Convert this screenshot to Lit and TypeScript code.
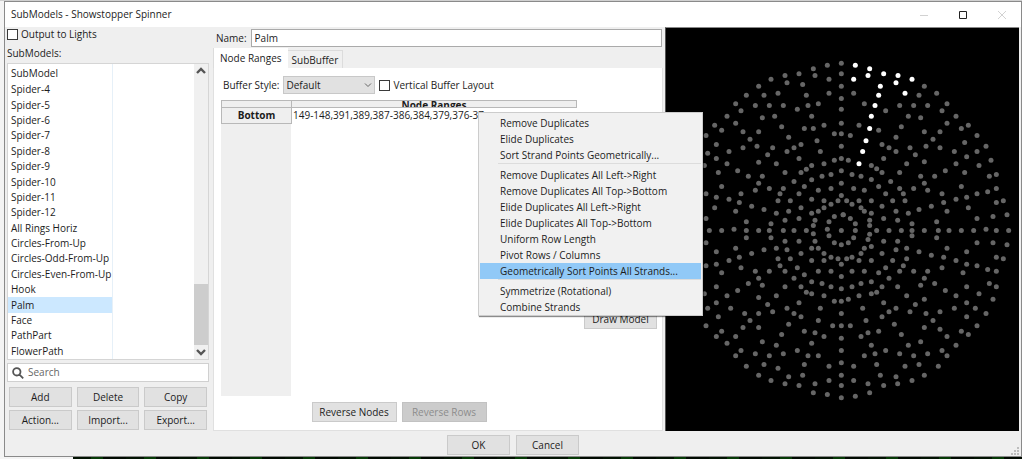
import { LitElement, html, svg, css } from "lit";
import { customElement, property, state } from "lit/decorators.js";
import { classMap } from "lit/directives/class-map.js";

type Quadrant = { x: number; y: number; dots: string };

/* Node positions, three units to a pixel, listed per quadrant. */
const NODES: Quadrant[] = [
  {
    x: -6,
    y: 6,
    dots: `532,98 532,130 532,167 532,204 532,236 532,278 532,310 532,347 532,384 532,421 532,458 532,495
    490,104 448,115 405,130 363,135 321,146 284,167 247,194 215,220 189,257 152,284 126,315
    453,135 495,146 495,188 369,157 416,162 342,188 300,194 427,194 463,220 432,225 358,225 316,225 274,225
    231,241 400,236 443,257 332,257 295,262 215,278 173,299 353,289 480,284 448,294 421,294 511,310
    284,304 237,304 374,320 258,326 459,331 411,342 157,342 279,347 237,352 326,352 390,352 369,363 469,363
    195,363 131,368 311,373 157,384 405,384 511,389 284,395 189,400 337,400 480,400 121,405 443,405 427,416
    221,421 163,426 363,426 411,426 501,432 253,437 295,437 474,437 443,448 390,453 284,458 421,468 173,468
    316,474 358,474 501,474 274,479 463,479 126,490 231,490 348,490 405,490 157,500 195,506 443,506
    342,511 379,511 480,511 522,511 226,516 501,521 263,527 152,532 411,532 480,532 300,537 215,542 374,542
    463,542 337,548 443,548 537,553 511,558 126,564 405,564 363,569 453,569 247,574 495,574 321,580 448,585`,
  },
  {
    x: 522,
    y: 6,
    dots: `41,188 253,167 290,188 237,194 73,220 179,225 221,225 263,225 321,220 137,241 306,241 205,257 242,262
    348,257 321,278 385,284 57,284 184,289 364,294 116,299 253,304 300,304 31,315 411,315 168,320 279,326
    374,336 126,342 147,352 210,352 258,347 300,352 438,347 168,363 343,363 411,363 226,373 380,379 131,384
    25,389 453,389 253,394 200,400 348,400 94,405 417,405 110,415 126,426 179,426 316,421 374,426 36,432
    63,437 242,437 284,437 448,437 469,432 94,447 152,453 253,458 116,468 364,468 41,474 73,479 179,474
    221,474 263,479 469,474 137,490 190,490 306,490 411,490 443,484 380,500 348,506 20,511 57,511 94,511
    158,511 195,511 490,511 36,521 311,516 469,516 63,532 126,527 274,527 385,532 73,542 237,537 168,542
    321,542 94,548 205,548 10,553 501,553 31,564 131,564 411,564 459,558 89,569 173,569 46,580 89,585
    216,580 290,574`,
  },
  {
    x: -6,
    y: 600,
    dots: `136,6 173,6 210,2 247,6 284,6 316,6 358,6 390,6 427,6 490,2 532,6 448,16 495,22 247,28 321,28 363,38
    405,38 453,38 126,43 511,43 532,49 215,59 337,59 443,59 463,59 300,64 369,64 157,70 263,75 411,75
    480,75 226,86 501,86 342,91 379,91 522,91 195,96 443,96 480,96 157,107 532,107 126,112 348,112 231,118
    400,118 274,128 316,128 363,128 463,128 501,128 173,133 421,139 532,144 284,149 390,149 443,160 253,165
    474,165 295,170 157,175 363,175 411,175 501,175 532,181 221,186 427,191 121,196 443,196 189,202 337,202
    480,202 284,207 511,218 532,218 157,223 405,223 311,228 131,239 200,239 369,239 469,239 326,250 242,255
    284,255 390,255 532,255 163,265 411,265 258,276 463,276 374,287 126,292 506,292 532,292 237,297 284,297
    173,308 421,308 453,313 353,318 157,324 215,324 480,324 532,329 295,340 189,344 443,344 337,350 231,366
    400,366 532,366 274,376 358,376 215,382 316,382 432,382 463,382 532,403 300,408 421,408 247,413 495,413
    342,419 284,440 416,440 532,440 374,445 321,456 495,456 363,466 453,466 405,471 532,471 448,493 490,498
    532,508`,
  },
  {
    x: 522,
    y: 600,
    dots: `46,6 110,6 147,6 184,6 216,6 253,6 295,6 327,6 364,6 401,6 438,2 469,6 506,6 89,17 216,22 41,28 84,33
    290,28 131,38 173,38 25,43 411,43 459,43 501,49 94,54 73,59 200,59 321,59 168,64 237,70 380,70 63,75
    126,75 274,80 36,86 311,86 469,86 20,91 200,91 490,91 57,96 94,96 158,96 348,96 380,107 190,112 411,112
    137,118 306,118 443,123 36,128 73,128 179,128 221,128 263,128 469,128 116,133 369,133 147,149 253,149
    94,160 63,165 284,165 448,165 242,170 36,175 126,175 173,175 380,175 469,175 316,186 110,191 94,196
    57,202 200,202 348,202 417,196 25,212 253,212 459,212 131,223 380,223 226,228 68,239 168,239 343,239
    406,239 147,250 210,250 300,250 258,255 438,255 126,265 380,265 78,276 279,276 163,287 31,292 411,292
    253,297 300,302 116,308 364,308 84,313 184,318 385,318 63,324 321,324 242,340 94,350 205,350 348,350
    137,366 306,366 105,376 179,376 263,376 73,382 221,382 321,382 110,408 237,408 41,413 195,413 295,413
    121,440 253,440 168,445 41,456 216,456 84,466 173,466 131,471 89,493 46,503`,
  },
];

const LIT_NODES: Quadrant = {
  x: 522,
  y: 6,
  dots: `46,104 89,115 84,135 41,146 131,130 174,135 168,157 216,146 195,188 121,167 116,194 105,225 94,257
  89,294 78,331 68,363 57,400`,
};

const drawNodes = (q: Quadrant) =>
  q.dots
    .trim()
    .split(/\s+/)
    .map((pair) => {
      const [x, y] = pair.split(",").map(Number);
      return svg`<circle cx=${x + q.x} cy=${y + q.y} r="7.5"></circle>`;
    });

const shared = css`
  * {
    box-sizing: border-box;
  }
  button,
  input,
  select {
    font: inherit;
    color: inherit;
    margin: 0;
  }
  .btn {
    height: 20px;
    padding: 0;
    border: 1px solid #cacaca;
    background: #e1e1e1;
    line-height: 16px;
    text-align: center;
  }
  .btn:disabled {
    background: #cccccc;
    border-color: #c2c2c2;
    color: #8c8c8c;
  }
  .check {
    display: flex;
    align-items: center;
    gap: 3px;
  }
  .check input {
    appearance: none;
    width: 11px;
    height: 11px;
    border: 1px solid #3a3a3a;
    background: #fff;
  }
`;

@customElement("model-preview")
export class ModelPreview extends LitElement {
  static styles = css`
    :host {
      display: block;
      background: #000;
      border-left: 1px solid #555;
      border-top: 1px solid #888;
      overflow: hidden;
      position: relative;
    }
    .canvas {
      display: block;
      width: 100%;
      height: 100%;
    }
    .off {
      fill: #666;
    }
    .on {
      fill: #fff;
    }
  `;
  render() {
    return html`<svg class="canvas" viewBox="0 0 1059 1206" role="img" aria-label="Model preview">
      <g class="off">${NODES.map(drawNodes)}</g>
      <g class="on">${drawNodes(LIT_NODES)}</g>
    </svg>`;
  }
}

@customElement("submodel-list")
export class SubmodelList extends LitElement {
  @property({ type: Array }) items: string[] = [];
  @state() selected = "Palm";

  static styles = [
    shared,
    css`
      :host {
        display: grid;
        grid-template-columns: 1fr 14px;
        background: #fff;
        border: 1px solid #d5d5d5;
        min-height: 0;
      }
      .rows {
        display: flex;
        flex-direction: column;
        width: 105px;
        border-right: 1px solid #e6f0f8;
      }
      .head {
        height: 18px;
        padding-left: 3px;
        line-height: 18px;
      }
      .list {
        flex: 1;
        display: grid;
        grid-template-columns: 100%;
        grid-auto-rows: 1fr;
        margin: 0;
        padding: 0;
        list-style: none;
      }
      .item {
        display: flex;
        align-items: center;
        padding-left: 3px;
        white-space: nowrap;
        line-height: 15px;
        min-height: 0;
      }
      .selected {
        background: #cce8ff;
      }
      .scroll {
        display: flex;
        flex-direction: column;
        align-items: stretch;
        background: #f0f0f0;
      }
      .arrow {
        height: 14px;
        padding: 0;
        border: 0;
        background: none;
        display: flex;
        align-items: center;
        justify-content: center;
      }
      .track {
        flex: 1;
        display: flex;
        align-items: flex-end;
      }
      .thumb {
        width: 100%;
        height: 23%;
        background: #cdcdcd;
      }
      .chev {
        fill: none;
        stroke: #555;
        stroke-width: 2.4;
      }
    `,
  ];

  render() {
    return html`
      <div class="rows">
        <div class="head">SubModel</div>
        <ul class="list" role="listbox" aria-label="SubModels">
          ${this.items.map(
            (name) => html`<li
              role="option"
              aria-selected=${name === this.selected}
              class=${classMap({ item: true, selected: name === this.selected })}
              @click=${() => (this.selected = name)}
            >${name}</li>`,
          )}
        </ul>
      </div>
      <div class="scroll">
        <button class="arrow" aria-label="Scroll up">
          <svg width="10" height="8" viewBox="0 0 10 8"><path class="chev" d="M1 6 L5 2 L9 6" /></svg>
        </button>
        <div class="track"><div class="thumb"></div></div>
        <button class="arrow" aria-label="Scroll down">
          <svg width="10" height="8" viewBox="0 0 10 8"><path class="chev" d="M1 2 L5 6 L9 2" /></svg>
        </button>
      </div>
    `;
  }
}

@customElement("context-menu")
export class ContextMenu extends LitElement {
  @property({ type: Array }) groups: string[][] = [];
  @state() active = "Geometrically Sort Points All Strands...";

  static styles = [
    shared,
    css`
      :host {
        display: block;
        padding: 2px 1px 0;
        background: #f1f1f1;
        border: 1px solid #ccc;
        box-shadow: 1px 1px 1px rgba(0, 0, 0, 0.45);
      }
      .sep {
        height: 4px;
        margin: 0 0 0 18px;
        border: 0;
        border-top: 1px solid #dcdcdc;
      }
      .entry {
        display: block;
        width: 100%;
        height: 16px;
        padding: 0 0 0 20px;
        border: 0;
        background: none;
        text-align: left;
        line-height: 16px;
        white-space: nowrap;
      }
      .active {
        background: #91c9f7;
      }
    `,
  ];

  render() {
    return this.groups.map(
      (group, i) => html`
        ${i ? html`<hr class="sep" />` : ""}
        ${group.map(
          (label) => html`<button
            role="menuitem"
            class=${classMap({ entry: true, active: label === this.active })}
            @mouseenter=${() => (this.active = label)}
          >${label}</button>`,
        )}
      `,
    );
  }
}

@customElement("app-root")
export class AppRoot extends LitElement {
  private submodels = [
    ...Array.from({ length: 9 }, (_, i) => `Spider-${i + 4}`),
    "All Rings Horiz",
    "Circles-From-Up",
    "Circles-Odd-From-Up",
    "Circles-Even-From-Up",
    "Hook",
    "Palm",
    "Face",
    "PathPart",
    "FlowerPath",
  ];

  private menu = [
    ["Remove Duplicates", "Elide Duplicates", "Sort Strand Points Geometrically..."],
    [
      "Remove Duplicates All Left->Right",
      "Remove Duplicates All Top->Bottom",
      "Elide Duplicates All Left->Right",
      "Elide Duplicates All Top->Bottom",
      "Uniform Row Length",
      "Pivot Rows / Columns",
      "Geometrically Sort Points All Strands...",
    ],
    ["Symmetrize (Rotational)", "Combine Strands"],
  ];

  static styles = [
    shared,
    css`
      :host {
        display: flex;
        flex-direction: column;
        min-height: 100vh;
        box-sizing: border-box;
        padding: 1px 0 0 4px;
        background: linear-gradient(#d0d0d0 1px, #f4f4f4 1px);
        font: 10px/15px "Open Sans", "Noto Sans", sans-serif;
        color: #1c1c1c;
      }
      .window {
        flex: 1;
        display: flex;
        flex-direction: column;
        position: relative;
        border: 1px solid #8a8a8a;
        background: #efefef;
      }
      .behind {
        height: 2px;
        margin-left: 69px;
        background: repeating-linear-gradient(90deg, #021302 0 18px, #063a06 18px 30px, #010a01 30px 53px);
      }
      .titlebar {
        display: flex;
        align-items: center;
        height: 25px;
        padding: 0 14px 0 6px;
        background: #fff;
      }
      .title {
        flex: 1;
        margin: 0;
        font: inherit;
      }
      .caption {
        display: flex;
        gap: 29px;
      }
      .cap {
        display: flex;
        padding: 0;
        border: 0;
        background: none;
      }
      .faint {
        fill: none;
        stroke: #d2d2d2;
      }
      .dark {
        fill: none;
        stroke: #222;
      }
      .body {
        flex: 1;
        display: grid;
        grid-template-columns: 206px 452px 1fr;
        padding: 0 2px 0 2px;
      }
      .left {
        display: flex;
        flex-direction: column;
        padding: 1px 4px 0 0;
      }
      .left .check {
        height: 13px;
      }
      .caption-text {
        height: 22px;
        line-height: 24px;
      }
      submodel-list {
        flex: 1;
      }
      .search {
        display: flex;
        align-items: center;
        gap: 4px;
        height: 19px;
        margin-top: 3px;
        padding-left: 4px;
        background: #fff;
        border: 1px solid #d0d0d0;
      }
      .search input {
        flex: 1;
        min-width: 0;
        padding: 0;
        border: 0;
        background: none;
      }
      .search input::placeholder {
        color: #666;
      }
      .glass {
        fill: none;
        stroke: #555;
        stroke-width: 1.8;
      }
      .actions {
        display: grid;
        grid-template-columns: repeat(3, 1fr);
        gap: 3px 5px;
        padding: 5px 2px 1px;
      }
      .middle {
        display: flex;
        flex-direction: column;
        padding: 2px 2px 0 0;
      }
      .name {
        display: flex;
        align-items: center;
        gap: 4px;
        padding: 0 1px 0 3px;
      }
      .name input {
        flex: 1;
        height: 18px;
        padding: 0 3px;
        border: 1px solid #aaa;
        background: #fff;
      }
      .tabs {
        display: flex;
        align-items: flex-end;
        height: 21px;
      }
      .tab {
        height: 18px;
        padding: 0 4px;
        border: 1px solid #dcdcdc;
        border-width: 1px 1px 0 0;
        background: #f0f0f0;
        line-height: 18px;
      }
      .current {
        height: 20px;
        padding: 0 6px;
        border-width: 0 0 0 1px;
        background: #fff;
      }
      .panel {
        flex: 1;
        display: flex;
        flex-direction: column;
        padding: 8px 5px 8px 7px;
        background: #fff;
        border: 1px solid #e0e0e0;
        border-top: 0;
      }
      .options {
        display: flex;
        align-items: center;
        gap: 4px;
        padding-left: 2px;
        height: 18px;
      }
      .combo {
        display: grid;
        align-items: center;
        width: 92px;
        height: 18px;
        background: #e1e1e1;
      }
      .combo select,
      .combo svg {
        grid-area: 1 / 1;
      }
      .combo select {
        appearance: none;
        height: 18px;
        padding: 0 2px;
        border: 1px solid #c8c8c8;
        background: none;
        line-height: 16px;
      }
      .combo svg {
        justify-self: end;
        margin-right: 3px;
        pointer-events: none;
      }
      .thin {
        fill: none;
        stroke: #666;
      }
      .work {
        flex: 1;
        display: grid;
        grid-template-columns: 1fr 73px;
        gap: 7px;
        margin-top: 6px;
      }
      .grid {
        background: linear-gradient(90deg, #efefef 70px, #fff 70px);
      }
      .data {
        width: 100%;
        table-layout: fixed;
        border-collapse: collapse;
      }
      .data th,
      .data td {
        padding: 0;
        font-weight: 400;
      }
      .data th {
        background: #efefef;
        border: 1px solid #b8b8b8;
        font-weight: 700;
      }
      .corner {
        width: 70px;
      }
      .clip {
        height: 6px;
        line-height: 8px;
        overflow: hidden;
      }
      .cell {
        height: 15px;
        padding-left: 1px;
        overflow: hidden;
        white-space: nowrap;
      }
      .data .side {
        line-height: 15px;
      }
      .tools {
        display: flex;
        flex-direction: column;
        padding-top: 209px;
      }
      .reverse {
        display: grid;
        grid-template-columns: 85px 85px;
        justify-content: center;
        gap: 5px;
        margin-top: 6px;
        padding-right: 80px;
      }
      .footer {
        display: grid;
        grid-template-columns: 1fr 63px 63px 1fr;
        gap: 6px;
        padding: 4px 2px 1px 2px;
      }
      .ok {
        grid-column: 2;
      }
      .grip {
        justify-self: end;
        align-self: end;
        fill: #bdbdbd;
      }
      context-menu {
        position: absolute;
        left: 473px;
        top: 110px;
        width: 225px;
      }
    `,
  ];

  render() {
    return html`
      <section class="window">
        <header class="titlebar">
          <h1 class="title">SubModels - Showstopper Spinner</h1>
          <div class="caption">
            <button class="cap" aria-label="Minimize">
              <svg width="10" height="10" viewBox="0 0 10 10"><path class="faint" d="M1 5.5H9" /></svg>
            </button>
            <button class="cap" aria-label="Maximize">
              <svg width="10" height="10" viewBox="0 0 10 10"><path class="dark" d="M1.5 1.5h7v7h-7z" /></svg>
            </button>
            <button class="cap" aria-label="Close">
              <svg width="10" height="10" viewBox="0 0 10 10"><path class="faint" d="M1 1L9 9M9 1L1 9" /></svg>
            </button>
          </div>
        </header>

        <main class="body">
          <div class="left">
            <label class="check"><input type="checkbox" />Output to Lights</label>
            <div class="caption-text">SubModels:</div>
            <submodel-list .items=${this.submodels}></submodel-list>
            <label class="search">
              <svg width="12" height="12" viewBox="0 0 12 12">
                <path class="glass" d="M8.5 4.8a3.7 3.7 0 1 1-7.4 0a3.7 3.7 0 0 1 7.4 0zM7.5 7.6L11.2 11.3" />
              </svg>
              <input type="text" placeholder="Search" aria-label="Search" />
            </label>
            <div class="actions">
              ${["Add", "Delete", "Copy", "Action...", "Import...", "Export..."].map(
                (t) => html`<button class="btn">${t}</button>`,
              )}
            </div>
          </div>

          <div class="middle">
            <div class="name">
              <label for="name">Name:</label>
              <input id="name" type="text" .value=${"Palm"} />
            </div>
            <div class="tabs" role="tablist">
              <button class="tab current" role="tab" aria-selected="true">Node Ranges</button>
              <button class="tab" role="tab" aria-selected="false">SubBuffer</button>
            </div>
            <div class="panel">
              <div class="options">
                <label for="style">Buffer Style:</label>
                <div class="combo">
                  <select id="style"><option>Default</option></select>
                  <svg width="8" height="6" viewBox="0 0 8 6"><path class="thin" d="M1 1.5L4 4.5L7 1.5" /></svg>
                </div>
                <label class="check"><input type="checkbox" />Vertical Buffer Layout</label>
              </div>
              <div class="work">
                <div class="grid">
                  <table class="data">
                    <thead>
                      <tr>
                        <th class="corner"></th>
                        <th scope="col"><div class="clip">Node Ranges</div></th>
                      </tr>
                    </thead>
                    <tbody>
                      <tr>
                        <th class="side" scope="row">Bottom</th>
                        <td><div class="cell">149-148,391,389,387-386,384,379,376-37</div></td>
                      </tr>
                    </tbody>
                  </table>
                </div>
                <div class="tools"><button class="btn">Draw Model</button></div>
              </div>
              <div class="reverse">
                <button class="btn">Reverse Nodes</button>
                <button class="btn" disabled>Reverse Rows</button>
              </div>
            </div>
          </div>

          <model-preview></model-preview>
        </main>

        <footer class="footer">
          <button class="btn ok">OK</button>
          <button class="btn">Cancel</button>
          <svg class="grip" width="8" height="8" viewBox="0 0 8 8">
            <path d="M6 0h2v2h-2zM3 3h2v2h-2zM6 3h2v2h-2zM0 6h2v2h-2zM3 6h2v2h-2zM6 6h2v2h-2z" />
          </svg>
        </footer>

        <context-menu role="menu" .groups=${this.menu}></context-menu>
      </section>
      <div class="behind"></div>
    `;
  }
}
